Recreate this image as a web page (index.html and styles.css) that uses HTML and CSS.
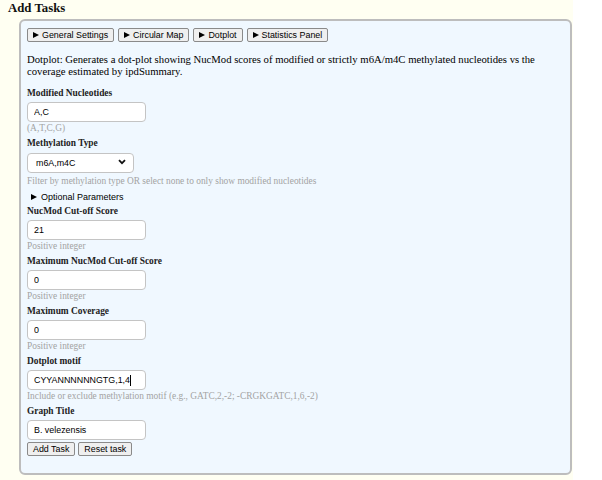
FILE: index.html
```html
<!DOCTYPE html>
<html>
<head>
<meta charset="utf-8">
<link rel="stylesheet" href="styles.css">
</head>
<body>
<div class="page">
  <h3 class="title">Add Tasks</h3>
  <div class="panel">
    <div class="tabs">
      <button class="btn"><span class="tri"></span>General Settings</button>
      <button class="btn"><span class="tri"></span>Circular Map</button>
      <button class="btn"><span class="tri"></span>Dotplot</button>
      <button class="btn"><span class="tri"></span>Statistics Panel</button>
    </div>
    <p class="desc">Dotplot: Generates a dot-plot showing NucMod scores of modified or strictly m6A/m4C methylated nucleotides vs the coverage estimated by ipdSummary.</p>

    <label class="lbl">Modified Nucleotides</label>
    <input class="inp" type="text" value="A,C">
    <div class="hint">(A,T,C,G)</div>

    <label class="lbl">Methylation Type</label>
    <div class="sel-wrap">
      <select class="sel"><option>m6A,m4C</option></select>
      <svg class="chev" width="8" height="6" viewBox="0 0 8 6"><path d="M1 1.2 L4 4.2 L7 1.2" fill="none" stroke="#111" stroke-width="1.8"/></svg>
    </div>
    <div class="hint hint-sel">Filter by methylation type OR select none to only show modified nucleotides</div>

    <div class="summary"><span class="tri"></span>Optional Parameters</div>

    <label class="lbl lbl-first">NucMod Cut-off Score</label>
    <input class="inp" type="text" value="21">
    <div class="hint">Positive integer</div>

    <label class="lbl">Maximum NucMod Cut-off Score</label>
    <input class="inp" type="text" value="0">
    <div class="hint">Positive integer</div>

    <label class="lbl">Maximum Coverage</label>
    <input class="inp" type="text" value="0">
    <div class="hint">Positive integer</div>

    <label class="lbl">Dotplot motif</label>
    <div class="inp fake"><span>CYYANNNNNNGTG,1,4</span><span class="caret"></span></div>
    <div class="hint">Include or exclude methylation motif (e.g., GATC,2,-2; -CRGKGATC,1,6,-2)</div>

    <label class="lbl">Graph Title</label>
    <input class="inp" type="text" value="B. velezensis">

    <div class="actions">
      <button class="btn">Add Task</button>
      <button class="btn">Reset task</button>
    </div>
  </div>
</div>
</body>
</html>
```

FILE: styles.css
```css
html, body {
  margin: 0;
  padding: 0;
  background: #ffffff;
}
.page {
  width: 573px;
  height: 480px;
  background: #fffff2;
  font-family: "Liberation Serif", "Times New Roman", serif;
  color: #000;
  overflow: hidden;
}
.title {
  margin: 0;
  padding-left: 8px;
  font-size: 12.8px;
  line-height: 16px;
  font-weight: bold;
  color: #111;
}
.panel {
  margin: 3px 0 0 19px;
  width: 553px;
  box-sizing: border-box;
  border: 2px solid #bdbdbd;
  border-radius: 6px;
  background: #f0f8ff;
  padding: 7px 6px 17px 6px;
  display: flex;
  flex-direction: column;
  align-items: flex-start;
}
.tabs {
  display: flex;
  gap: 4px;
}
.btn {
  font-family: "Liberation Sans", Arial, sans-serif;
  font-size: 8.9px;
  height: 14px;
  line-height: 12px;
  padding: 0 5px;
  margin: 0;
  border: 1px solid #8a8a8a;
  border-radius: 2px;
  background: #efefef;
  color: #000;
  display: inline-flex;
  align-items: center;
  box-sizing: border-box;
}
.tri {
  display: inline-block;
  width: 0;
  height: 0;
  border-left: 6px solid #000;
  border-top: 3.5px solid transparent;
  border-bottom: 3.5px solid transparent;
  margin-right: 3px;
}
.desc {
  margin: 11px 0 10px 0;
  font-size: 10.7px;
  line-height: 12px;
  width: 530px;
}
.lbl {
  display: block;
  font-weight: bold;
  font-size: 9.4px;
  line-height: 12px;
  color: #222;
  margin-top: 3px;
}
.lbl:first-of-type { margin-top: 0; }
.lbl-first { margin-top: 2px; }
.inp {
  width: 119px;
  height: 20px;
  box-sizing: border-box;
  margin: 3px 0 0 0;
  border: 1px solid #c4c4c4;
  border-radius: 4px;
  background: #fff;
  padding: 0 0 0 6px;
  font-family: "Liberation Sans", Arial, sans-serif;
  font-size: 8.9px;
  color: #000;
  outline: none;
}
.fake {
  display: flex;
  align-items: center;
}
.caret {
  display: inline-block;
  width: 1px;
  height: 11px;
  background: #000;
  margin-left: 0;
}
.hint {
  font-size: 9.4px;
  line-height: 12px;
  color: #a3a3a3;
}
.hint-sel { margin-top: 2px; }
.sel-wrap {
  position: relative;
  margin-top: 3px;
}
.sel {
  -webkit-appearance: none;
  appearance: none;
  width: 107px;
  height: 20px;
  box-sizing: border-box;
  margin: 0;
  border: 1px solid #c4c4c4;
  border-radius: 4px;
  background: #fff;
  padding: 0 0 0 8px;
  font-family: "Liberation Sans", Arial, sans-serif;
  font-size: 8.9px;
  color: #000;
}
.chev {
  position: absolute;
  right: 8px;
  top: 7px;
}
.summary {
  margin-top: 4px;
  padding-left: 4px;
  font-family: "Liberation Sans", Arial, sans-serif;
  font-size: 9px;
  line-height: 12px;
  display: flex;
  align-items: center;
}
.summary .tri { margin-right: 4px; }
.actions {
  display: flex;
  gap: 3px;
  margin-top: 2px;
}
```
